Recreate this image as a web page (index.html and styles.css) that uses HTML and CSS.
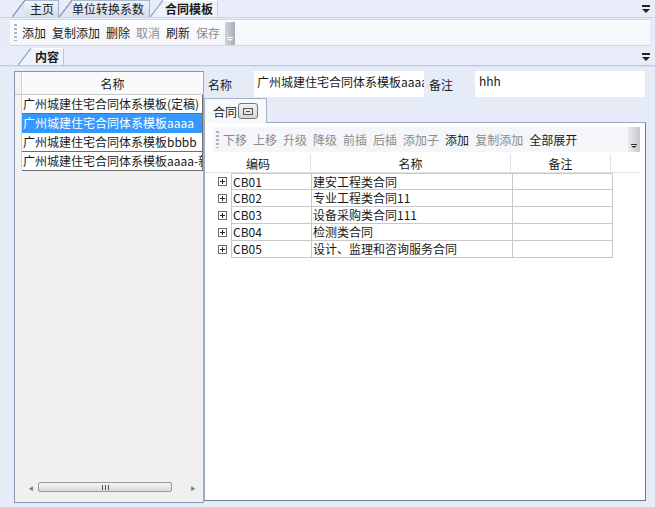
FILE: index.html
```html
<!DOCTYPE html>
<html lang="zh-CN">
<head>
<meta charset="utf-8">
<title>合同模板</title>
<link rel="stylesheet" href="styles.css">
</head>
<body>
<div class="app">
  <div class="tabstrip top-strip">
    <div class="tab tab-home">主页</div>
    <div class="tab tab-unit">单位转换系数</div>
    <div class="tab tab-active">合同模板</div>
    <div class="strip-fill"></div>
    <svg class="menu-glyph" width="8" height="8" viewBox="0 0 8 8"><rect x="0" y="0" width="8" height="2" fill="#222"/><polygon points="0,4 8,4 4,8" fill="#222"/></svg>
  </div>

  <div class="toolbar main-toolbar">
    <span class="grip"></span>
    <span class="tb-btn">添加</span>
    <span class="tb-btn">复制添加</span>
    <span class="tb-btn">删除</span>
    <span class="tb-btn off">取消</span>
    <span class="tb-btn">刷新</span>
    <span class="tb-btn off">保存</span>
    <span class="end-grip"><svg width="6" height="4" viewBox="0 0 6 4"><rect x="0" y="0" width="6" height="1" fill="#fff"/><polygon points="0,2 6,2 3,4" fill="#fff"/></svg></span>
  </div>

  <div class="tabstrip sub-strip">
    <div class="tab tab-content">内容</div>
    <div class="strip-fill"></div>
    <svg class="menu-glyph" width="8" height="8" viewBox="0 0 8 8"><rect x="0" y="0" width="8" height="2" fill="#222"/><polygon points="0,4 8,4 4,8" fill="#222"/></svg>
  </div>

  <div class="content">
    <div class="left-panel">
      <div class="list-head"><span class="rh"></span><span class="lh-cell">名称</span></div>
      <div class="list-body">
        <div class="lrow"><span class="rh"></span><span class="lcell">广州城建住宅合同体系模板(定稿)</span></div>
        <div class="lrow sel"><span class="rh"></span><span class="lcell">广州城建住宅合同体系模板aaaa</span></div>
        <div class="lrow"><span class="rh"></span><span class="lcell">广州城建住宅合同体系模板bbbb</span></div>
        <div class="lrow"><span class="rh"></span><span class="lcell">广州城建住宅合同体系模板aaaa-新</span></div>
      </div>
      <div class="hscroll">
        <span class="arr">&#9664;</span>
        <span class="thumb"><span class="thumb-grip"></span></span>
        <span class="arr">&#9654;</span>
      </div>
    </div>

    <div class="right-panel">
      <div class="form-row">
        <span class="f-label">名称</span>
        <span class="f-input name-input">广州城建住宅合同体系模板aaaa</span>
        <span class="f-label f-label2">备注</span>
        <span class="f-input note-input">hhh</span>
      </div>
      <div class="inner-tabs">
        <div class="itab">合同<span class="itab-icon"><svg width="12" height="9" viewBox="0 0 12 9"><rect x="1.5" y="1.5" width="9" height="6" fill="none" stroke="#555" stroke-width="1"/><rect x="4" y="4" width="4" height="1" fill="#555"/></svg></span></div>
      </div>
      <div class="inner-panel">
        <div class="toolbar sub-toolbar">
          <span class="grip"></span>
          <span class="tb-btn off">下移</span>
          <span class="tb-btn off">上移</span>
          <span class="tb-btn off">升级</span>
          <span class="tb-btn off">降级</span>
          <span class="tb-btn off">前插</span>
          <span class="tb-btn off">后插</span>
          <span class="tb-btn off">添加子</span>
          <span class="tb-btn">添加</span>
          <span class="tb-btn off">复制添加</span>
          <span class="tb-btn">全部展开</span>
          <span class="tb-spacer"></span>
          <span class="end-grip small"><svg width="6" height="4" viewBox="0 0 6 4"><rect x="0" y="0" width="6" height="1" fill="#333"/><polygon points="0,2 6,2 3,4" fill="#333"/></svg></span>
        </div>
        <div class="grid">
          <div class="g-head">
            <span class="gh c1">编码</span>
            <span class="gh c2">名称</span>
            <span class="gh c3">备注</span>
            <span class="gh c4"></span>
          </div>
          <div class="g-row"><span class="exp"><i class="plus"></i></span><span class="gc">CB01</span><span class="gc">建安工程类合同</span><span class="gc"></span></div>
          <div class="g-row"><span class="exp"><i class="plus"></i></span><span class="gc">CB02</span><span class="gc">专业工程类合同11</span><span class="gc"></span></div>
          <div class="g-row"><span class="exp"><i class="plus"></i></span><span class="gc">CB03</span><span class="gc">设备采购类合同111</span><span class="gc"></span></div>
          <div class="g-row"><span class="exp"><i class="plus"></i></span><span class="gc">CB04</span><span class="gc">检测类合同</span><span class="gc"></span></div>
          <div class="g-row"><span class="exp"><i class="plus"></i></span><span class="gc">CB05</span><span class="gc">设计、监理和咨询服务合同</span><span class="gc"></span></div>
        </div>
      </div>
    </div>
  </div>
</div>
</body>
</html>
```

FILE: styles.css
```css
* { box-sizing: border-box; }
html, body { margin: 0; padding: 0; }
body {
  width: 655px;
  height: 507px;
  overflow: hidden;
  background: #e6ebf8;
  font-family: "Noto Sans CJK SC", "Microsoft YaHei", sans-serif;
  font-size: 12px;
  color: #1a1a1a;
}
.app {
  width: 655px;
  height: 507px;
  display: flex;
  flex-direction: column;
}

/* tab strips */
.tabstrip {
  display: flex;
  align-items: stretch;
  background: #e8edf9;
  position: relative;
}
.top-strip {
  height: 18px;
  padding-left: 12px;
  border-bottom: 1px solid #c9d5ec;
}
.sub-strip {
  height: 20px;
  padding-left: 18px;
  padding-top: 2px;
  border-bottom: 1px solid #b9c9e6;
}
.strip-fill { flex: 1; }
.menu-glyph {
  align-self: center;
  margin-right: 5px;
}
.tab {
  position: relative;
  flex: none;
  display: flex;
  align-items: center;
  white-space: nowrap;
  line-height: 16px;
  padding-left: 18px;
  padding-right: 4px;
  background: linear-gradient(to bottom, #f1f4fb, #d3dcee);
  border-top: 1px solid #aab8d0;
  border-right: 1px solid #9fb0cc;
  color: #1a1a1a;
}
.tab::before {
  content: "";
  position: absolute;
  left: 0;
  top: -1px;
  bottom: 0;
  width: 13px;
  background: linear-gradient(to bottom right, #e8edf9 46%, #8a9bb8 49%, #8a9bb8 52%, #dfe6f4 56%);
}
.tab-home { width: 47px; padding-left: 18px; }
.tab-unit { width: 91px; padding-left: 13px; }
.tab-active {
  width: 68px;
  padding-left: 15px;
  font-weight: bold;
  background: #eef2fb;
  border-top-color: #ffffff;
  border-right-color: #c0cde6;
}
.tab-active::before {
  background: linear-gradient(to bottom right, #e8edf9 46%, #9aabc6 49%, #9aabc6 52%, #eef2fb 56%);
}
.tab-content {
  width: 46px;
  padding-left: 17px;
  font-weight: bold;
  background: #eef2fb;
  border-top-color: #ffffff;
  border-right-color: #b9c7e2;
}
.tab-content::before {
  background: linear-gradient(to bottom right, #e8edf9 46%, #9aabc6 49%, #9aabc6 52%, #eef2fb 56%);
}

/* toolbars */
.toolbar {
  display: flex;
  align-items: center;
}
.main-toolbar {
  height: 27px;
  margin: 1px 5px 0 10px;
  padding-left: 4px;
  background: linear-gradient(to bottom, #fbfcfe, #f4f6fa);
  border-top: 1px solid #cdd8ee;
  border-bottom: 1px solid #cdd8ee;
}
.grip {
  width: 3px;
  height: 17px;
  margin-right: 5px;
  background: repeating-linear-gradient(to bottom, #a9b3c4 0 2px, transparent 2px 4px);
}
.tb-btn {
  margin-right: 6px;
  line-height: 16px;
  white-space: nowrap;
  color: #1a1a1a;
}
.tb-btn.off { color: #8c8c8c; }
.end-grip {
  align-self: stretch;
  width: 10px;
  margin: 2px 0 0 -1px;
  background: linear-gradient(to right, #d0d3d8, #a9aeb6);
  display: flex;
  align-items: flex-end;
  justify-content: center;
  padding-bottom: 4px;
}
.end-grip.small {
  width: 12px;
  margin: 0;
  background: linear-gradient(to right, #e9eaed, #c6c9cf);
}
.tb-spacer { flex: 1; }

/* content */
.content {
  flex: 1;
  display: flex;
  padding: 4px 5px 4px 14px;
  min-height: 0;
  border-top: 1px solid #d6e0f2;
}

/* left panel */
.left-panel {
  width: 190px;
  display: flex;
  flex-direction: column;
  background: #f0f0f0;
  border: 1px solid #8796b0;
  border-right: 1px solid #a0acc0;
}
.list-head {
  display: flex;
  height: 23px;
  background: #fafafa;
  border-bottom: 1px solid #c8c8c8;
}
.rh {
  width: 7px;
  flex: none;
  background: #f3f3f3;
  border-right: 1px solid #d2d2d2;
}
.lh-cell {
  flex: 1;
  text-align: center;
  line-height: 24px;
}
.list-body { flex: 1; }
.lrow {
  display: flex;
  height: 19px;
}
.lcell {
  flex: 1;
  overflow: hidden;
  white-space: nowrap;
  padding-left: 1px;
  line-height: 18px;
  background: #ffffff;
  border-bottom: 1px solid #6e6e6e;
  border-right: 1px solid #6e6e6e;
}
.lrow.sel .lcell {
  background: #3399ff;
  color: #ffffff;
  border-bottom-color: #3399ff;
}
.hscroll {
  height: 12px;
  margin: 0 6px 9px 12px;
  display: flex;
  align-items: center;
}
.arr {
  font-size: 5px;
  color: #7b7b7b;
  width: 8px;
  text-align: center;
}
.thumb {
  flex: 1;
  height: 10px;
  margin: 0 17px 0 3px;
  border: 1px solid #9a9a9a;
  border-radius: 2px;
  background: linear-gradient(to bottom, #f6f6f6, #d9d9d9);
  display: flex;
  justify-content: center;
  align-items: center;
}
.thumb-grip {
  width: 7px;
  height: 5px;
  background: repeating-linear-gradient(to right, #555 0 1px, transparent 1px 3px);
}

/* right panel */
.right-panel {
  flex: 1;
  display: flex;
  flex-direction: column;
  min-width: 0;
  background: #e6ebf8;
}
.form-row {
  height: 26px;
  display: flex;
  align-items: stretch;
}
.f-label {
  width: 50px;
  padding-left: 4px;
  line-height: 26px;
  padding-top: 1px;
}
.f-label2 { width: 51px; padding-left: 5px; }
.f-input {
  background: #ffffff;
  white-space: nowrap;
  overflow: hidden;
  padding: 0 2px 0 3px;
  line-height: 22px;
}
.name-input { width: 170px; }
.note-input { width: 170px; padding-left: 4px; line-height: 20px; }
.inner-tabs {
  height: 25px;
  display: flex;
  align-items: flex-end;
}
.itab {
  width: 63px;
  height: 25px;
  display: flex;
  align-items: center;
  padding-left: 8px;
  background: #f7f9fd;
  border: 1px solid #a4b1c7;
  border-bottom: none;
  position: relative;
  z-index: 1;
  margin-bottom: -1px;
}
.itab-icon {
  width: 20px;
  height: 16px;
  margin-left: 1px;
  border: 1px solid #777;
  border-radius: 3px;
  background: linear-gradient(to bottom, #f2f2f2, #d6d6d6);
  display: flex;
  align-items: center;
  justify-content: center;
}
.inner-panel {
  flex: 1;
  margin-right: 4px;
  margin-bottom: 2px;
  background: #ffffff;
  border: 1px solid #9ba9c2;
  border-right-color: #6f7a8c;
  border-bottom-color: #6f7a8c;
  display: flex;
  flex-direction: column;
}
.sub-toolbar {
  height: 25px;
  margin: 4px 5px 2px 8px;
  padding-left: 3px;
  background: #f4f6f9;
}
.sub-toolbar .grip { margin-right: 4px; }
.grid {
  padding-left: 1px;
}
.g-head {
  display: flex;
  height: 19px;
}
.gh {
  text-align: center;
  line-height: 19px;
  background: #ffffff;
  border-right: 1px solid #e2e2e2;
  border-bottom: 1px solid #e2e2e2;
}
.gh.c1 { width: 105px; }
.gh.c2 { width: 200px; }
.gh.c3 { width: 100px; }
.gh.c4 { width: 29px; border-right: none; }
.g-row {
  display: flex;
  height: 17px;
}
.exp {
  width: 25px;
  display: flex;
  align-items: center;
  padding-left: 12px;
  background: #ffffff;
}
.plus {
  width: 9px;
  height: 9px;
  border: 1px solid #6a6a6a;
  position: relative;
}
.plus::before {
  content: "";
  position: absolute;
  left: 1px; right: 1px; top: 3px;
  height: 1px;
  background: #222;
}
.plus::after {
  content: "";
  position: absolute;
  top: 1px; bottom: 1px; left: 3px;
  width: 1px;
  background: #222;
}
.gc {
  line-height: 16px;
  padding-left: 1px;
  border-bottom: 1px solid #c8c8c8;
  border-right: 1px solid #c8c8c8;
  white-space: nowrap;
  overflow: hidden;
}
.g-head + .g-row .gc { border-top: 1px solid #c8c8c8; }
.gc:nth-child(2) { width: 81px; border-left: 1px solid #c8c8c8; }
.gc:nth-child(3) { width: 201px; }
.gc:nth-child(4) { width: 100px; }
```
